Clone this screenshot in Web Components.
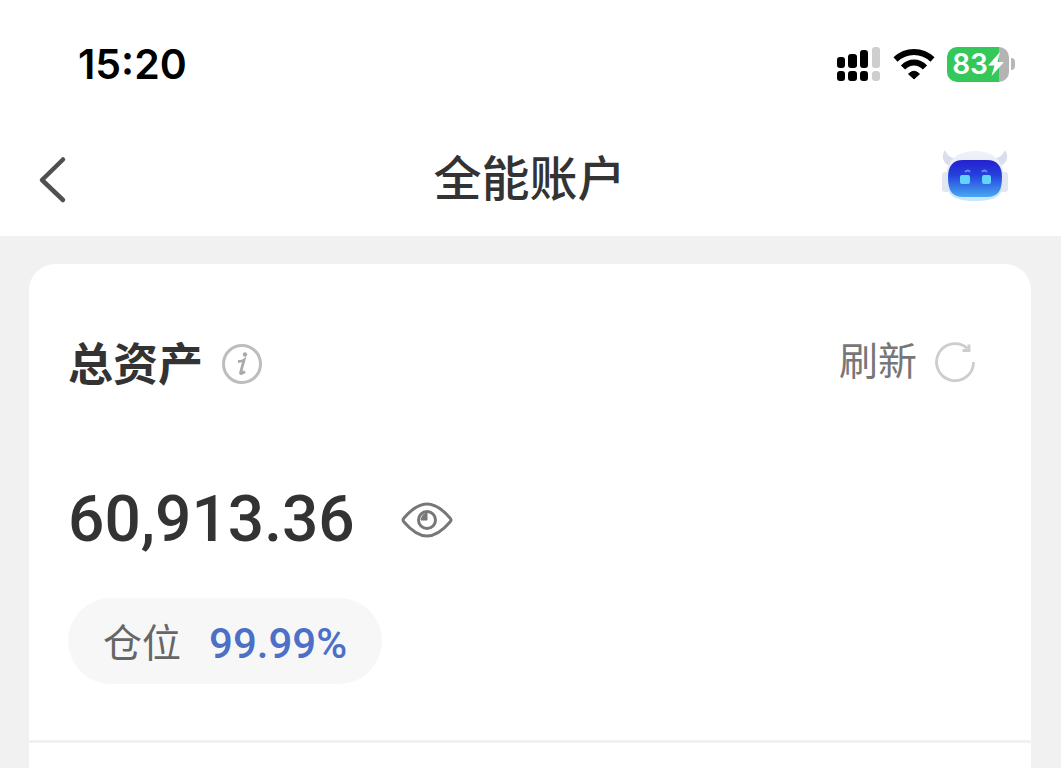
<!DOCTYPE html>
<html lang="zh-CN">
<head>
<meta charset="UTF-8">
<meta name="viewport" content="width=device-width, initial-scale=1">
<title>全能账户</title>
<style>
    body {
        margin: 0;
        min-height: 100vh;
        background: #f1f1f1;
        color: #333;
        font-family: "Liberation Sans", "Noto Sans CJK SC", sans-serif;
    }
</style>
</head>
<body>
<account-page></account-page>

<script>
// crea el shadow root y le pone el contenido
function render(el, html) {
    const template = document.createElement("template");
    template.innerHTML = html;
    el.attachShadow({ mode: "open" }).appendChild(template.content.cloneNode(true));
}

// estilo comun de los botones de icono
const buttonStyle = `
    button {
        display: flex;
        align-items: center;
        margin: 0;
        padding: 0;
        border: none;
        background: none;
        color: inherit;
        font: inherit;
        cursor: pointer;
    }
    svg { display: block; flex: none; }
`;

class BatteryLevel extends HTMLElement {
    constructor() {
        super();
        render(this, `
            <style>
                :host { display: flex; align-items: center; gap: 2px; }
                .body {
                    display: flex;
                    align-items: center;
                    justify-content: center;
                    width: 62px;
                    height: 35px;
                    border-radius: 10px;
                    background: linear-gradient(to right, #34c759 52px, #b4b4b4 52px);
                    color: #fff;
                    font: 600 28px/35px Inter, sans-serif;
                }
                .tip { width: 4px; height: 12px; border-radius: 0 6px 6px 0; background: #b8b8b8; }
                svg { display: block; }
            </style>
            <div class="body">
                <slot></slot>
                <svg width="16" height="26" viewBox="0 0 16 26"><path d="M12 1 0 14.500h6.500L3.500 25 16 11H9.500z" fill="#fff"/></svg>
            </div>
            <div class="tip"></div>
        `);
    }
}
customElements.define("battery-level", BatteryLevel);

class StatusBar extends HTMLElement {
    constructor() {
        super();
        render(this, `
            <style>
                :host {
                    display: flex;
                    align-items: center;
                    justify-content: space-between;
                    height: 128px;
                    padding: 0 46px 0 78px;
                    box-sizing: border-box;
                    background: #fff;
                }
                time { color: #000; font: 600 41px/48px Inter, sans-serif; }
                .icons { display: flex; align-items: center; gap: 12px; }
                svg { display: block; }
            </style>
            <time><slot></slot></time>
            <div class="icons">
                <svg width="46" height="36" viewBox="0 0 46 36">
                    <g fill="#000">
                        <rect x="2" y="11" width="8" height="11" rx="3"/>
                        <rect x="13" y="8" width="9" height="14" rx="3"/>
                        <rect x="25" y="4" width="8" height="18" rx="3"/>
                        <rect x="2" y="25" width="8" height="10" rx="3"/>
                        <rect x="13" y="25" width="9" height="10" rx="3"/>
                        <rect x="25" y="25" width="8" height="10" rx="3"/>
                    </g>
                    <g fill="#cecece">
                        <rect x="37" y="1" width="8" height="21" rx="3"/>
                        <rect x="37" y="25" width="8" height="10" rx="3"/>
                    </g>
                </svg>
                <svg width="42" height="32" viewBox="0 0 42 32">
                    <g fill="none" stroke="#000" stroke-width="6">
                        <path d="M2.500 11.500Q10.500 4 21 4t18.500 7.500"/>
                        <path d="M10 19.500Q15 14.500 21 14.500t11 5"/>
                    </g>
                    <path d="M15.500 26Q21 20.500 26.500 26L21 31z" fill="#000" stroke="#000"/>
                </svg>
                <battery-level>83</battery-level>
            </div>
        `);
    }
}
customElements.define("status-bar", StatusBar);

class NavBar extends HTMLElement {
    constructor() {
        super();
        render(this, `
            <style>
                ${buttonStyle}
                :host {
                    display: grid;
                    grid-template-columns: 1fr auto 1fr;
                    align-items: center;
                    height: 108px;
                    padding: 0 52px 4px 36px;
                    box-sizing: border-box;
                    background: #fff;
                }
                h1 { margin: 0; padding-left: 14px; font-size: 48px; line-height: 64px; font-weight: 500; }
                .robot { justify-self: end; }
            </style>
            <button aria-label="返回">
                <svg width="32" height="50" viewBox="0 0 32 50"><path d="M27 4.500 6 25l21 20" fill="none" stroke="#505050" stroke-width="4.500" stroke-linecap="round" stroke-linejoin="round"/></svg>
            </button>
            <h1><slot></slot></h1>
            <button class="robot" aria-label="智能助手">
                <svg width="68" height="64" viewBox="0 0 68 64">
                    <defs>
                        <linearGradient id="face" x1="0" y1="0" x2="0" y2="1">
                            <stop offset="0" stop-color="#2620cf"/>
                            <stop offset=".4" stop-color="#2440dc"/>
                            <stop offset="1" stop-color="#48a8f2"/>
                        </linearGradient>
                        <linearGradient id="shell" x1="0" y1="0" x2="0" y2="1">
                            <stop offset="0" stop-color="#f0f2f8"/>
                            <stop offset=".5" stop-color="#e2e8f5"/>
                            <stop offset="1" stop-color="#c5e7fa"/>
                        </linearGradient>
                    </defs>
                    <path d="M4 2C-1 10 3 17 12 19l8-9C13 12 7 9 4 2zM64 2c5 8 1 15-8 17l-8-9c7 2 13-1 16-8z" fill="#dadeea"/>
                    <rect x="1" y="24" width="8" height="20" rx="3" fill="#e3e6ef"/>
                    <rect x="59" y="24" width="8" height="20" rx="3" fill="#e3e6ef"/>
                    <path d="M34 3c17 0 29 9 29 27 0 17-7 23-29 23S5 47 5 30C5 12 17 3 34 3z" fill="url(#shell)"/>
                    <path d="M22 12h24c10 0 15 6 15 17 0 14-4 20-15 20H22C11 49 7 43 7 29 7 18 12 12 22 12z" fill="url(#face)"/>
                    <path d="M24 24q3-3 5 0M41 24q2-3 5 0" fill="none" stroke="#638df4" stroke-width="2"/>
                    <rect x="19" y="27" width="10" height="9" rx="2" fill="#62d4fb"/>
                    <rect x="41" y="27" width="9" height="9" rx="2" fill="#62d4fb"/>
                </svg>
            </button>
        `);
    }
}
customElements.define("nav-bar", NavBar);

class PositionTag extends HTMLElement {
    constructor() {
        super();
        render(this, `
            <style>
                :host {
                    display: inline-flex;
                    align-items: center;
                    gap: 28px;
                    height: 86px;
                    padding: 5px 35px 0;
                    box-sizing: border-box;
                    border-radius: 43px;
                    background: #f7f7f7;
                    color: #666;
                    font-size: 39px;
                    line-height: 56px;
                }
                .value { color: #4c70c8; font-family: Roboto, sans-serif; font-size: 42px; font-weight: 500; }
            </style>
            <span><slot></slot></span>
            <span class="value"><slot name="value"></slot></span>
        `);
    }
}
customElements.define("position-tag", PositionTag);

class AssetCard extends HTMLElement {
    constructor() {
        super();
        render(this, `
            <style>
                ${buttonStyle}
                :host {
                    display: block;
                    flex: 1;
                    border-radius: 26px 26px 0 0;
                    background: #fff;
                }
                .summary { padding: 66px 40px 56px 39px; border-bottom: 3px solid #f1f1f1; }
                .row { display: flex; align-items: center; }
                .head { justify-content: space-between; padding-right: 15px; }
                .title { gap: 18px; }
                h2 { margin: 0; padding-top: 4px; font-size: 45px; line-height: 64px; font-weight: 700; }
                .refresh { gap: 17px; padding-bottom: 4px; color: #777; font-size: 39px; line-height: 56px; }
                .total { gap: 46px; margin: 82px 0 38px; }
                .amount { font: 500 64px/80px Roboto, sans-serif; }
            </style>
            <div class="summary">
                <div class="row head">
                    <div class="row title">
                        <h2><slot name="title"></slot></h2>
                        <button aria-label="说明">
                            <svg width="42" height="42" viewBox="0 0 42 42">
                                <circle cx="21" cy="21" r="18.500" fill="none" stroke="#bdbdbd" stroke-width="3"/>
                                <circle cx="24" cy="11.500" r="2.200" fill="#aaa"/>
                                <path d="M17 18.500q4 0 6-1.500L19.500 30q0 1.500 4.500-1.500" fill="none" stroke="#aaa" stroke-width="2.800"/>
                            </svg>
                        </button>
                    </div>
                    <button class="refresh">
                        <span><slot name="action"></slot></span>
                        <svg width="42" height="42" viewBox="0 0 42 42" fill="none" stroke="#cdcdcd" stroke-width="2.800">
                            <path d="M39.500 21A18.500 18.500 0 1 1 33.500 7.500"/>
                            <path d="M28.500 9.500H35V3.500"/>
                        </svg>
                    </button>
                </div>
                <div class="row total">
                    <span class="amount"><slot name="amount"></slot></span>
                    <button aria-label="隐藏金额">
                        <svg width="52" height="36" viewBox="0 0 52 36" fill="none" stroke="#777" stroke-width="3">
                            <path d="M3 16Q15 2 26 2t23 14q2 2 0 4Q37 34 26 34T3 20q-2-2 0-4z"/>
                            <circle cx="26" cy="18" r="8.500"/>
                            <path d="M20 18h6v-7q-5 1-6 7z" fill="#777" stroke-width="1"/>
                        </svg>
                    </button>
                </div>
                <slot></slot>
            </div>
        `);
    }
}
customElements.define("asset-card", AssetCard);

class AccountPage extends HTMLElement {
    constructor() {
        super();
        render(this, `
            <style>
                :host { display: flex; flex-direction: column; min-height: 100vh; }
                main { display: flex; flex: 1; padding: 28px 30px 0 29px; }
            </style>
            <header>
                <status-bar>15:20</status-bar>
                <nav-bar>全能账户</nav-bar>
            </header>
            <main>
                <asset-card>
                    <span slot="title">总资产</span>
                    <span slot="action">刷新</span>
                    <span slot="amount">60,913.36</span>
                    <position-tag>仓位<span slot="value">99.99%</span></position-tag>
                </asset-card>
            </main>
        `);
    }
}
customElements.define("account-page", AccountPage);
</script>
</body>
</html>
